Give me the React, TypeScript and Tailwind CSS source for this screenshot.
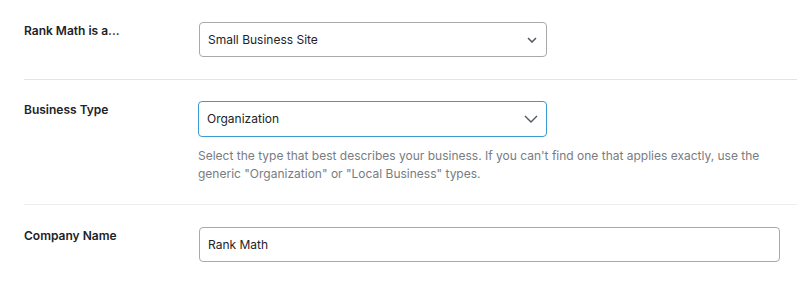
import React from "react";

function Chevron({ big }: { big?: boolean }) {
  return big ? (
    <svg width="14" height="8" viewBox="0 0 14 8" fill="none">
      <path d="M1 1l6 6 6-6" stroke="#50575e" strokeWidth="1.4" />
    </svg>
  ) : (
    <svg width="10" height="6" viewBox="0 0 10 6" fill="none">
      <path d="M1 1l4 4 4-4" stroke="#50575e" strokeWidth="1.5" />
    </svg>
  );
}

export default function App() {
  const font = { fontFamily: "Inter, 'Noto Sans', sans-serif" };
  return (
    <div className="w-[800px] h-[283px] bg-white text-[#1d2327] overflow-hidden" style={font}>
      <div className="pl-6 pr-[3px]">
        {/* Row 1 */}
        <div className="flex pt-[22px] pb-[22px] border-b border-[#e2e4e7]">
          <div className="w-[175px] shrink-0 text-[12px] leading-[18px] font-semibold">Rank Math is a...</div>
          <div className="w-[348px] h-[35px] border border-[#a7aaad] rounded-[4px] flex items-center justify-between pl-[8px] pr-[9px] text-[12px]">
            <span>Small Business Site</span>
            <Chevron />
          </div>
        </div>
        {/* Row 2 */}
        <div className="flex pt-[21px] pb-[21px] border-b border-[#eceef0]">
          <div className="w-[174px] shrink-0 text-[12px] leading-[18px] font-semibold">Business Type</div>
          <div className="flex flex-col">
            <div className="w-[349px] h-[36px] border-[1.5px] border-[#3a9bd0] rounded-[4px] flex items-center justify-between pl-[8px] pr-[8px] text-[12px]">
              <span>Organization</span>
              <Chevron big />
            </div>
            <p className="mt-[10px] w-[580px] text-[12px] leading-[18px] text-[#787c82]">
              Select the type that best describes your business. If you can't find one that applies exactly, use the generic "Organization" or "Local Business" types.
            </p>
          </div>
        </div>
        {/* Row 3 */}
        <div className="flex pt-[22px] pb-[22px]">
          <div className="w-[175px] shrink-0 text-[12px] leading-[18px] font-semibold">Company Name</div>
          <div className="w-[581px] h-[35px] border border-[#a7aaad] rounded-[4px] flex items-center pl-[8px] text-[12px]">
            Rank Math
          </div>
        </div>
      </div>
    </div>
  );
}
